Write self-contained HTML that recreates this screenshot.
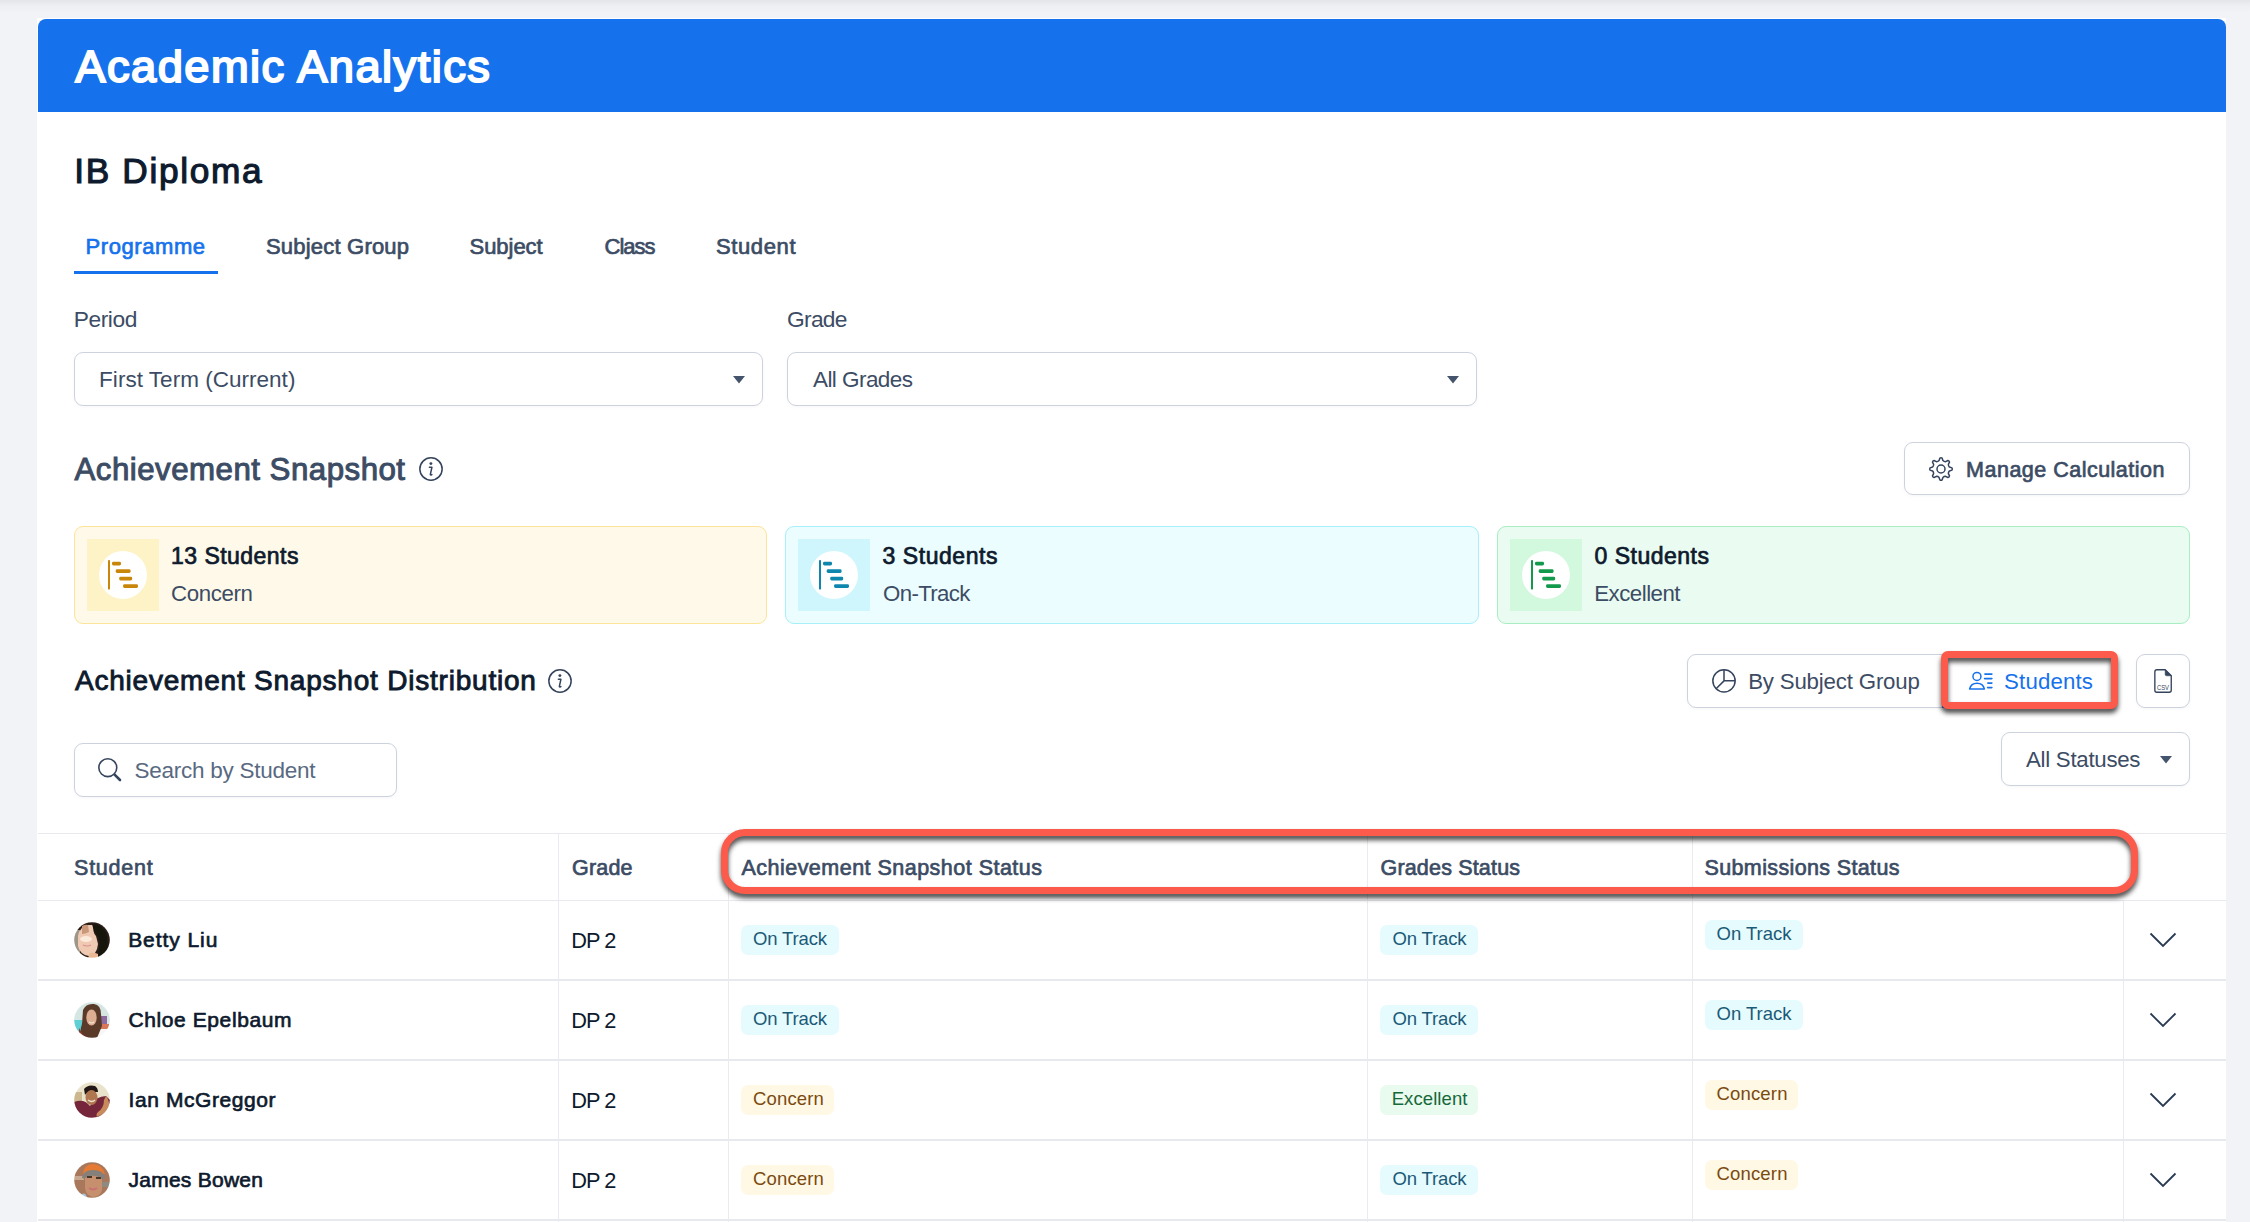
<!DOCTYPE html>
<html><head><meta charset="utf-8"><style>
html,body{margin:0;padding:0}
body{width:2250px;height:1222px;overflow:hidden;position:relative;font-family:"Liberation Sans",sans-serif;
background:linear-gradient(180deg,#e4e5e9 0px,#eeeff3 6px,#f2f3f7 14px,#f2f3f7 100%)}
.r,.t,.box{position:absolute}
.t{white-space:nowrap}
.box{box-sizing:border-box;border:1.5px solid #cdd3dd;border-radius:9px;background:#fff;box-shadow:0 1px 3px rgba(16,24,40,.04)}
.card{position:absolute;left:37.4px;top:18.4px;width:2188.6px;height:1300px;background:#fff}
.hdr{position:absolute;left:38px;top:19px;width:2188px;height:93px;background:#1672ec;border-radius:8px 8px 0 0}
</style></head><body>
<div class="card"></div><div class="hdr"></div>
<div class="t" id="title" style="left:75.34px;top:44.38px;font-size:45.25px;line-height:45.25px;letter-spacing:1.458px;font-weight:normal;color:#ffffff;-webkit-text-stroke:1.99px #ffffff;">Academic Analytics</div>
<div class="t" id="ib" style="left:74.2px;top:153.38px;font-size:35.25px;line-height:35.25px;letter-spacing:1.662px;font-weight:normal;color:#0e1a2d;-webkit-text-stroke:1.13px #0e1a2d;">IB Diploma</div>
<div class="t" id="tab1" style="left:85.62px;top:236.0px;font-size:22.0px;line-height:22.0px;letter-spacing:0.561px;font-weight:normal;color:#1672ec;-webkit-text-stroke:0.7px #1672ec;">Programme</div>
<div class="t" id="tab2" style="left:266.0px;top:236.0px;font-size:22.0px;line-height:22.0px;letter-spacing:0.199px;font-weight:normal;color:#3c4c64;-webkit-text-stroke:0.7px #3c4c64;">Subject Group</div>
<div class="t" id="tab3" style="left:469.5px;top:236.0px;font-size:22.0px;line-height:22.0px;letter-spacing:-0.038px;font-weight:normal;color:#3c4c64;-webkit-text-stroke:0.7px #3c4c64;">Subject</div>
<div class="t" id="tab4" style="left:604.58px;top:236.0px;font-size:22.0px;line-height:22.0px;letter-spacing:-1.025px;font-weight:normal;color:#3c4c64;-webkit-text-stroke:0.7px #3c4c64;">Class</div>
<div class="t" id="tab5" style="left:716.0px;top:236.0px;font-size:22.0px;line-height:22.0px;letter-spacing:0.616px;font-weight:normal;color:#3c4c64;-webkit-text-stroke:0.7px #3c4c64;">Student</div>
<div class="r" style="left:74px;top:271px;width:144px;height:3px;background:#1672ec"></div>
<div class="t" id="period" style="left:73.68px;top:308.12px;font-size:22.75px;line-height:22.75px;letter-spacing:-0.402px;font-weight:normal;color:#3c4c64;">Period</div>
<div class="t" id="gradelbl" style="left:787.1px;top:308.12px;font-size:22.75px;line-height:22.75px;letter-spacing:-0.731px;font-weight:normal;color:#3c4c64;">Grade</div>
<div class="box" style="left:74px;top:352px;width:689px;height:54px"></div>
<div class="box" style="left:787px;top:352px;width:690px;height:54px"></div>
<div class="t" id="dd1" style="left:99.1px;top:368.75px;font-size:22.5px;line-height:22.5px;letter-spacing:0.024px;font-weight:normal;color:#3c4c64;">First Term (Current)</div>
<div class="t" id="dd2" style="left:812.94px;top:368.75px;font-size:22.5px;line-height:22.5px;letter-spacing:-0.551px;font-weight:normal;color:#3c4c64;">All Grades</div>
<svg class="r" style="left:733px;top:375.5px" width="12" height="8" viewBox="0 0 12 8"><path d="M0 0H12L6 7.5Z" fill="#44546c"/></svg>
<svg class="r" style="left:1447px;top:375.5px" width="12" height="8" viewBox="0 0 12 8"><path d="M0 0H12L6 7.5Z" fill="#44546c"/></svg>
<div class="t" id="as" style="left:74.44px;top:454.38px;font-size:31.25px;line-height:31.25px;letter-spacing:0.486px;font-weight:normal;color:#3c4c64;-webkit-text-stroke:1.0px #3c4c64;">Achievement Snapshot</div>
<svg class="r" style="left:418px;top:455.9px" width="26" height="26" viewBox="-13 -13 26 26"><circle r="11.15" fill="none" stroke="#34445c" stroke-width="1.5"/><circle cx="-0.1" cy="-5.4" r="1.45" fill="#34445c"/><path d="M-1.6 -1.7H0.9L-0.6 5.2Q-0.8 6.2 0 6.0L0.9 5.6" fill="none" stroke="#34445c" stroke-width="1.5" stroke-linecap="round" stroke-linejoin="round"/></svg>
<div class="box" style="left:1904px;top:442px;width:286px;height:53px"></div>
<svg class="r" style="left:1927.95px;top:455.9px" width="26" height="26" viewBox="-13 -13 26 26"><path d="M-1.10 -10.95 Q0.00 -11.70 1.10 -10.95 L1.92 -8.49 Q3.02 -7.30 4.64 -7.36 L6.96 -8.52 Q8.27 -8.27 8.52 -6.96 L7.36 -4.64 Q7.30 -3.02 8.49 -1.92 L10.95 -1.10 Q11.70 0.00 10.95 1.10 L8.49 1.92 Q7.30 3.02 7.36 4.64 L8.52 6.96 Q8.27 8.27 6.96 8.52 L4.64 7.36 Q3.02 7.30 1.92 8.49 L1.10 10.95 Q0.00 11.70 -1.10 10.95 L-1.92 8.49 Q-3.02 7.30 -4.64 7.36 L-6.96 8.52 Q-8.27 8.27 -8.52 6.96 L-7.36 4.64 Q-7.30 3.02 -8.49 1.92 L-10.95 1.10 Q-11.70 0.00 -10.95 -1.10 L-8.49 -1.92 Q-7.30 -3.02 -7.36 -4.64 L-8.52 -6.96 Q-8.27 -8.27 -6.96 -8.52 L-4.64 -7.36 Q-3.02 -7.30 -1.92 -8.49 L-1.10 -10.95Z" fill="none" stroke="#34445c" stroke-width="1.5" stroke-linejoin="round"/><circle r="4.0" fill="none" stroke="#34445c" stroke-width="1.5"/></svg>
<div class="t" id="mc" style="left:1966.08px;top:459.75px;font-size:21.5px;line-height:21.5px;letter-spacing:0.491px;font-weight:normal;color:#3c4c64;-webkit-text-stroke:0.69px #3c4c64;">Manage Calculation</div>
<div class="r" style="left:74px;top:526px;width:693px;height:98px;box-sizing:border-box;background:#fff9e9;border:1.5px solid #fce49a;border-radius:9px"></div>
<div class="r" style="left:87px;top:539px;width:72px;height:72px;background:#fdf3c6"></div>
<svg class="r" style="left:99px;top:551px" width="48" height="48" viewBox="-24 -24 48 48"><circle r="24" fill="#fff"/><rect x="-15" y="-14.8" width="2" height="29.2" fill="#c9870a"/><rect x="-11" y="-13.2" width="9" height="3.6" rx="1.4" fill="#c9870a"/><rect x="-7.3" y="-5.7" width="14.9" height="3.6" rx="1.4" fill="#c9870a"/><rect x="-3.8" y="1.8" width="13" height="3.6" rx="1.4" fill="#c9870a"/><rect x="0.1" y="9.2" width="14.9" height="3.7" rx="1.4" fill="#c9870a"/></svg>
<div class="t" id="c1a" style="left:171.12px;top:545.0px;font-size:23.0px;line-height:23.0px;letter-spacing:0.46px;font-weight:normal;color:#0e1a2d;-webkit-text-stroke:0.74px #0e1a2d;">13 Students</div>
<div class="t" id="c1b" style="left:171.1px;top:582.88px;font-size:22.25px;line-height:22.25px;letter-spacing:-0.381px;font-weight:normal;color:#3c4c64;">Concern</div>
<div class="r" style="left:785px;top:526px;width:694px;height:98px;box-sizing:border-box;background:#ebfdfe;border:1.5px solid #a7eff9;border-radius:9px"></div>
<div class="r" style="left:798px;top:539px;width:72px;height:72px;background:#cff6fc"></div>
<svg class="r" style="left:810px;top:551px" width="48" height="48" viewBox="-24 -24 48 48"><circle r="24" fill="#fff"/><rect x="-15" y="-14.8" width="2" height="29.2" fill="#0e86ad"/><rect x="-11" y="-13.2" width="9" height="3.6" rx="1.4" fill="#0e86ad"/><rect x="-7.3" y="-5.7" width="14.9" height="3.6" rx="1.4" fill="#0e86ad"/><rect x="-3.8" y="1.8" width="13" height="3.6" rx="1.4" fill="#0e86ad"/><rect x="0.1" y="9.2" width="14.9" height="3.7" rx="1.4" fill="#0e86ad"/></svg>
<div class="t" id="c2a" style="left:882.54px;top:545.0px;font-size:23.0px;line-height:23.0px;letter-spacing:0.547px;font-weight:normal;color:#0e1a2d;-webkit-text-stroke:0.74px #0e1a2d;">3 Students</div>
<div class="t" id="c2b" style="left:883.02px;top:582.88px;font-size:22.25px;line-height:22.25px;letter-spacing:-0.633px;font-weight:normal;color:#3c4c64;">On-Track</div>
<div class="r" style="left:1497px;top:526px;width:693px;height:98px;box-sizing:border-box;background:#eafcf1;border:1.5px solid #a9edc3;border-radius:9px"></div>
<div class="r" style="left:1510px;top:539px;width:72px;height:72px;background:#d2f8de"></div>
<svg class="r" style="left:1522px;top:551px" width="48" height="48" viewBox="-24 -24 48 48"><circle r="24" fill="#fff"/><rect x="-15" y="-14.8" width="2" height="29.2" fill="#11994c"/><rect x="-11" y="-13.2" width="9" height="3.6" rx="1.4" fill="#11994c"/><rect x="-7.3" y="-5.7" width="14.9" height="3.6" rx="1.4" fill="#11994c"/><rect x="-3.8" y="1.8" width="13" height="3.6" rx="1.4" fill="#11994c"/><rect x="0.1" y="9.2" width="14.9" height="3.7" rx="1.4" fill="#11994c"/></svg>
<div class="t" id="c3a" style="left:1594.52px;top:545.0px;font-size:23.0px;line-height:23.0px;letter-spacing:0.491px;font-weight:normal;color:#0e1a2d;-webkit-text-stroke:0.74px #0e1a2d;">0 Students</div>
<div class="t" id="c3b" style="left:1594.16px;top:582.88px;font-size:22.25px;line-height:22.25px;letter-spacing:-0.487px;font-weight:normal;color:#3c4c64;">Excellent</div>
<div class="t" id="asd" style="left:74.94px;top:667.0px;font-size:28.0px;line-height:28.0px;letter-spacing:0.786px;font-weight:normal;color:#0e1a2d;-webkit-text-stroke:0.9px #0e1a2d;">Achievement Snapshot Distribution</div>
<svg class="r" style="left:546.6px;top:667.8px" width="26" height="26" viewBox="-13 -13 26 26"><circle r="11.15" fill="none" stroke="#34445c" stroke-width="1.5"/><circle cx="-0.1" cy="-5.4" r="1.45" fill="#34445c"/><path d="M-1.6 -1.7H0.9L-0.6 5.2Q-0.8 6.2 0 6.0L0.9 5.6" fill="none" stroke="#34445c" stroke-width="1.5" stroke-linecap="round" stroke-linejoin="round"/></svg>
<div class="box" style="left:1687px;top:654px;width:431px;height:54px"></div>
<div class="r" style="left:1942px;top:654px;width:176px;height:54px;box-sizing:border-box;border:1.5px solid #1672ec;border-radius:0 8px 8px 0"></div>
<svg class="r" style="left:1710px;top:667px" width="28" height="28" viewBox="-14 -13.85 28 28"><circle r="11.15" fill="none" stroke="#34445c" stroke-width="1.5"/><path d="M0 -11V0H11M0 0L-7.9 7.9" fill="none" stroke="#34445c" stroke-width="1.5"/></svg>
<div class="t" id="bsg" style="left:1748.14px;top:670.88px;font-size:22.25px;line-height:22.25px;letter-spacing:-0.174px;font-weight:normal;color:#3c4c64;">By Subject Group</div>
<svg class="r" style="left:1966px;top:670px" width="28" height="22" viewBox="0 0 28 22"><circle cx="10.95" cy="6.4" r="4.0" fill="none" stroke="#1672ec" stroke-width="1.5"/><path d="M3.6 19.05C4.5 15.4 7 13.35 11 13.35C15 13.35 17.5 15.4 18.4 19.05Z" fill="none" stroke="#1672ec" stroke-width="1.5" stroke-linejoin="round"/><path d="M18.9 4.1H25.9M18.6 8.6H25.9M21.8 13.1H25.9M21.6 17.6H25.9" stroke="#1672ec" stroke-width="1.6" stroke-linecap="round"/></svg>
<div class="t" id="stu" style="left:2004.1px;top:670.88px;font-size:22.25px;line-height:22.25px;letter-spacing:0.141px;font-weight:normal;color:#1672ec;">Students</div>
<div class="box" style="left:2136px;top:654px;width:54px;height:54px"></div>
<svg class="r" style="left:2152px;top:667px" width="22" height="28" viewBox="0 0 22 28"><path d="M5 2.75H13.2L19.25 8.8V23.25Q19.25 25.25 17.25 25.25H4.85Q2.85 25.25 2.85 23.25V4.9Q2.85 2.75 5 2.75Z" fill="none" stroke="#34445c" stroke-width="1.35" stroke-linejoin="round"/><path d="M13.2 2.75V7.3Q13.2 8.8 14.7 8.8H19.25Z" fill="#34445c" stroke="#34445c" stroke-width="0.6" stroke-linejoin="round"/><text x="5" y="22.7" font-size="7.6" textLength="12" lengthAdjust="spacingAndGlyphs" font-family="Liberation Sans" fill="#34445c">CSV</text></svg>
<div class="box" style="left:74px;top:743px;width:323px;height:54px"></div>
<svg class="r" style="left:95px;top:755px" width="30" height="30" viewBox="0 0 30 30"><circle cx="12.8" cy="12.7" r="8.95" fill="none" stroke="#34445c" stroke-width="1.6"/><path d="M19.6 19.6L25 25" stroke="#34445c" stroke-width="2.6" stroke-linecap="round"/></svg>
<div class="t" id="search" style="left:134.62px;top:759.75px;font-size:22.5px;line-height:22.5px;letter-spacing:-0.265px;font-weight:normal;color:#596981;">Search by Student</div>
<div class="box" style="left:2001px;top:732px;width:189px;height:54px"></div>
<div class="t" id="allst" style="left:2026.02px;top:748.88px;font-size:22.25px;line-height:22.25px;letter-spacing:-0.276px;font-weight:normal;color:#3c4c64;">All Statuses</div>
<svg class="r" style="left:2160px;top:756px" width="12" height="8" viewBox="0 0 12 8"><path d="M0 0H12L6 7.5Z" fill="#44546c"/></svg>
<div class="r" style="left:38px;top:833px;width:2188px;height:1px;background:#e8e9ee"></div>
<div class="r" style="left:38px;top:900px;width:2188px;height:1.3px;background:#e8e9ee"></div>
<div class="r" style="left:38px;top:979.1px;width:2188px;height:1.9px;background:#e8e9ee"></div>
<div class="r" style="left:38px;top:1059.1px;width:2188px;height:1.9px;background:#e8e9ee"></div>
<div class="r" style="left:38px;top:1139.1px;width:2188px;height:1.9px;background:#e8e9ee"></div>
<div class="r" style="left:38px;top:1219.1px;width:2188px;height:1.9px;background:#e8e9ee"></div>
<div class="r" style="left:558px;top:833px;width:1px;height:389px;background:#eaebf0"></div>
<div class="r" style="left:728px;top:833px;width:1px;height:389px;background:#eaebf0"></div>
<div class="r" style="left:1367px;top:833px;width:1px;height:389px;background:#eaebf0"></div>
<div class="r" style="left:1692px;top:833px;width:1px;height:389px;background:#eaebf0"></div>
<div class="r" style="left:2123px;top:900px;width:1px;height:322px;background:#eaebf0"></div>
<div class="t" id="th1" style="left:74.06px;top:857.75px;font-size:21.5px;line-height:21.5px;letter-spacing:0.74px;font-weight:normal;color:#3c4c64;-webkit-text-stroke:0.69px #3c4c64;">Student</div>
<div class="t" id="th2" style="left:572.04px;top:857.75px;font-size:21.5px;line-height:21.5px;letter-spacing:0.173px;font-weight:normal;color:#3c4c64;-webkit-text-stroke:0.69px #3c4c64;">Grade</div>
<div class="t" id="th3" style="left:741.46px;top:857.75px;font-size:21.5px;line-height:21.5px;letter-spacing:0.481px;font-weight:normal;color:#3c4c64;-webkit-text-stroke:0.69px #3c4c64;">Achievement Snapshot Status</div>
<div class="t" id="th4" style="left:1380.52px;top:857.75px;font-size:21.5px;line-height:21.5px;letter-spacing:0.173px;font-weight:normal;color:#3c4c64;-webkit-text-stroke:0.69px #3c4c64;">Grades Status</div>
<div class="t" id="th5" style="left:1704.54px;top:857.75px;font-size:21.5px;line-height:21.5px;letter-spacing:0.361px;font-weight:normal;color:#3c4c64;-webkit-text-stroke:0.69px #3c4c64;">Submissions Status</div>
<svg class="r" style="left:74px;top:921.8px" width="36" height="36" viewBox="0 0 36 36"><defs><clipPath id="cp0"><circle cx="18" cy="18" r="17.8"/></clipPath><filter id="bl0" x="-10%" y="-10%" width="120%" height="120%"><feGaussianBlur stdDeviation="0.7"/></filter></defs><g clip-path="url(#cp0)"><g filter="url(#bl0)"><rect width="36" height="36" fill="#2a1e18"/><rect x="0" y="8" width="6" height="26" fill="#9d968a"/><path d="M4 14 Q6 4 14 3 L20 3 Q18 10 22 14 L24 22 Q23 33 15 34 Q6 33 4 24Z" fill="#f0c9b3"/><path d="M8 4 Q12 2 14 3 L15 10 Q11 12 8 12Z" fill="#c9977a"/><ellipse cx="12" cy="17" rx="6" ry="3" fill="#fbe9da"/><path d="M9 23 Q13 25 17 23" stroke="#d98f8f" stroke-width="1.2" fill="none"/><path d="M16 31 Q20 30 24 32 L24 36 L14 36Z" fill="#eab894"/><path d="M18 2 Q30 2 33 14 L34 30 Q30 36 24 36 L25 26 Q27 18 22 12 Q19 8 18 2Z" fill="#191210"/></g></g></svg>
<div class="t" id="n1" style="left:128.14px;top:928.5px;font-size:21.0px;line-height:21.0px;letter-spacing:0.942px;font-weight:normal;color:#0e1a2d;-webkit-text-stroke:0.67px #0e1a2d;">Betty Liu</div>
<div class="t" id="dp1" style="left:571.18px;top:930.12px;font-size:21.75px;line-height:21.75px;letter-spacing:-0.9px;font-weight:normal;color:#0e1a2d;">DP 2</div>
<div class="r" style="left:741px;top:925px;width:98px;height:29.5px;background:#e6fbfe;border-radius:7px"></div>
<div class="t" id="b00" style="left:753.04px;top:929.75px;font-size:18.5px;line-height:18.5px;letter-spacing:-0.159px;font-weight:normal;color:#1b5a77;">On Track</div>
<div class="r" style="left:1380px;top:925px;width:98px;height:29.5px;background:#e6fbfe;border-radius:7px"></div>
<div class="t" id="b01" style="left:1392.54px;top:929.75px;font-size:18.5px;line-height:18.5px;letter-spacing:-0.159px;font-weight:normal;color:#1b5a77;">On Track</div>
<div class="r" style="left:1705px;top:920px;width:98px;height:29.5px;background:#e6fbfe;border-radius:7px"></div>
<div class="t" id="b02" style="left:1716.58px;top:924.75px;font-size:18.5px;line-height:18.5px;letter-spacing:-0.03px;font-weight:normal;color:#1b5a77;">On Track</div>
<svg class="r" style="left:2149px;top:932px" width="28" height="16" viewBox="0 0 28 16"><path d="M1.5 1.5L14 14L26.5 1.5" fill="none" stroke="#2a3a52" stroke-width="1.8"/></svg>
<svg class="r" style="left:74px;top:1001.8px" width="36" height="36" viewBox="0 0 36 36"><defs><clipPath id="cp1"><circle cx="18" cy="18" r="17.8"/></clipPath><filter id="bl1" x="-10%" y="-10%" width="120%" height="120%"><feGaussianBlur stdDeviation="0.7"/></filter></defs><g clip-path="url(#cp1)"><g filter="url(#bl1)"><rect width="36" height="36" fill="#d6e6e2"/><rect x="0" y="18" width="8" height="14" fill="#5fcfd6"/><rect x="27" y="14" width="6" height="10" fill="#8e6aa0"/><rect x="24" y="22" width="12" height="5" fill="#d9775a"/><path d="M22 27 L36 27 L36 36 L22 36Z" fill="#f7f7f8"/><path d="M9 8 Q12 1 20 2 Q27 3 27 12 L28 24 L23 36 L8 36 Q5 30 8 22Z" fill="#5a3b2c"/><path d="M5 26 Q8 32 12 36 L5 36Z" fill="#8a3a2a"/><ellipse cx="17.5" cy="15.5" rx="5.2" ry="8" fill="#dcae92"/><path d="M15 20 Q17.5 22 20 20" stroke="#f5e6e0" stroke-width="1.2" fill="none"/></g></g></svg>
<div class="t" id="n2" style="left:128.56px;top:1008.5px;font-size:21.0px;line-height:21.0px;letter-spacing:0.585px;font-weight:normal;color:#0e1a2d;-webkit-text-stroke:0.67px #0e1a2d;">Chloe Epelbaum</div>
<div class="t" id="dp2" style="left:571.18px;top:1010.12px;font-size:21.75px;line-height:21.75px;letter-spacing:-0.9px;font-weight:normal;color:#0e1a2d;">DP 2</div>
<div class="r" style="left:741px;top:1005px;width:98px;height:29.5px;background:#e6fbfe;border-radius:7px"></div>
<div class="t" id="b10" style="left:753.04px;top:1009.75px;font-size:18.5px;line-height:18.5px;letter-spacing:-0.159px;font-weight:normal;color:#1b5a77;">On Track</div>
<div class="r" style="left:1380px;top:1005px;width:98px;height:29.5px;background:#e6fbfe;border-radius:7px"></div>
<div class="t" id="b11" style="left:1392.54px;top:1009.75px;font-size:18.5px;line-height:18.5px;letter-spacing:-0.159px;font-weight:normal;color:#1b5a77;">On Track</div>
<div class="r" style="left:1705px;top:1000px;width:98px;height:29.5px;background:#e6fbfe;border-radius:7px"></div>
<div class="t" id="b12" style="left:1716.58px;top:1004.75px;font-size:18.5px;line-height:18.5px;letter-spacing:-0.03px;font-weight:normal;color:#1b5a77;">On Track</div>
<svg class="r" style="left:2149px;top:1012px" width="28" height="16" viewBox="0 0 28 16"><path d="M1.5 1.5L14 14L26.5 1.5" fill="none" stroke="#2a3a52" stroke-width="1.8"/></svg>
<svg class="r" style="left:74px;top:1081.8px" width="36" height="36" viewBox="0 0 36 36"><defs><clipPath id="cp2"><circle cx="18" cy="18" r="17.8"/></clipPath><filter id="bl2" x="-10%" y="-10%" width="120%" height="120%"><feGaussianBlur stdDeviation="0.7"/></filter></defs><g clip-path="url(#cp2)"><g filter="url(#bl2)"><rect width="36" height="36" fill="#e9e3cc"/><rect x="0" y="10" width="8" height="12" fill="#cdb78f"/><path d="M0 20 Q10 16 16 24 Q22 14 32 14 L36 18 L36 36 L0 36Z" fill="#74283a"/><path d="M10 7 Q14 2 21 4 Q24 6 24 10 L17 10 Q12 11 11 13Z" fill="#231913"/><ellipse cx="17.5" cy="15.5" rx="6" ry="7.5" fill="#b07650"/><path d="M14 18 Q18 21 21 18" stroke="#f0e2d0" stroke-width="1.4" fill="none"/><path d="M32 14 Q37 20 34 28 Q28 34 18 36 L26 36 Q20 34 24 30 Q30 26 30 18Z" fill="#c88a5c"/></g></g></svg>
<div class="t" id="n3" style="left:128.6px;top:1088.5px;font-size:21.0px;line-height:21.0px;letter-spacing:0.574px;font-weight:normal;color:#0e1a2d;-webkit-text-stroke:0.67px #0e1a2d;">Ian McGreggor</div>
<div class="t" id="dp3" style="left:571.18px;top:1090.12px;font-size:21.75px;line-height:21.75px;letter-spacing:-0.9px;font-weight:normal;color:#0e1a2d;">DP 2</div>
<div class="r" style="left:741px;top:1085px;width:93px;height:29.5px;background:#fff8e5;border-radius:7px"></div>
<div class="t" id="b20" style="left:753.04px;top:1089.75px;font-size:18.5px;line-height:18.5px;letter-spacing:0.152px;font-weight:normal;color:#7b4a0f;">Concern</div>
<div class="r" style="left:1380px;top:1085px;width:98px;height:29.5px;background:#e8fbee;border-radius:7px"></div>
<div class="t" id="b21" style="left:1391.64px;top:1089.75px;font-size:18.5px;line-height:18.5px;letter-spacing:0.102px;font-weight:normal;color:#17683a;">Excellent</div>
<div class="r" style="left:1705px;top:1080px;width:93px;height:29.5px;background:#fff8e5;border-radius:7px"></div>
<div class="t" id="b22" style="left:1716.58px;top:1084.75px;font-size:18.5px;line-height:18.5px;letter-spacing:0.152px;font-weight:normal;color:#7b4a0f;">Concern</div>
<svg class="r" style="left:2149px;top:1092px" width="28" height="16" viewBox="0 0 28 16"><path d="M1.5 1.5L14 14L26.5 1.5" fill="none" stroke="#2a3a52" stroke-width="1.8"/></svg>
<svg class="r" style="left:74px;top:1161.8px" width="36" height="36" viewBox="0 0 36 36"><defs><clipPath id="cp3"><circle cx="18" cy="18" r="17.8"/></clipPath><filter id="bl3" x="-10%" y="-10%" width="120%" height="120%"><feGaussianBlur stdDeviation="0.7"/></filter></defs><g clip-path="url(#cp3)"><g filter="url(#bl3)"><rect width="36" height="36" fill="#a9785c"/><rect x="0" y="14" width="10" height="4" fill="#c8a88e"/><rect x="26" y="20" width="10" height="5" fill="#8f8a7f"/><path d="M9 12 Q10 2 19 2 Q29 3 31 12Z" fill="#e57a34"/><path d="M8 16 Q9 8 19 8 Q30 8 31 16 L28 18 Q20 11 11 17Z" fill="#858079"/><path d="M11 16 Q20 11 28 17 L28 28 Q26 35 19 35 Q12 34 11 26Z" fill="#c68f6d"/><rect x="13" y="14" width="5" height="2" fill="#4b3428"/><rect x="22" y="15" width="5" height="2" fill="#4b3428"/><path d="M15 26 Q19 29 23 26" stroke="#c96f74" stroke-width="1.8" fill="none"/><path d="M8 32 Q12 30 13 36 L6 36Z" fill="#a9c4d8"/></g></g></svg>
<div class="t" id="n4" style="left:128.48px;top:1168.5px;font-size:21.0px;line-height:21.0px;letter-spacing:0.258px;font-weight:normal;color:#0e1a2d;-webkit-text-stroke:0.67px #0e1a2d;">James Bowen</div>
<div class="t" id="dp4" style="left:571.18px;top:1170.12px;font-size:21.75px;line-height:21.75px;letter-spacing:-0.9px;font-weight:normal;color:#0e1a2d;">DP 2</div>
<div class="r" style="left:741px;top:1165px;width:93px;height:29.5px;background:#fff8e5;border-radius:7px"></div>
<div class="t" id="b30" style="left:753.04px;top:1169.75px;font-size:18.5px;line-height:18.5px;letter-spacing:0.152px;font-weight:normal;color:#7b4a0f;">Concern</div>
<div class="r" style="left:1380px;top:1165px;width:98px;height:29.5px;background:#e6fbfe;border-radius:7px"></div>
<div class="t" id="b31" style="left:1392.54px;top:1169.75px;font-size:18.5px;line-height:18.5px;letter-spacing:-0.159px;font-weight:normal;color:#1b5a77;">On Track</div>
<div class="r" style="left:1705px;top:1160px;width:93px;height:29.5px;background:#fff8e5;border-radius:7px"></div>
<div class="t" id="b32" style="left:1716.58px;top:1164.75px;font-size:18.5px;line-height:18.5px;letter-spacing:0.152px;font-weight:normal;color:#7b4a0f;">Concern</div>
<svg class="r" style="left:2149px;top:1172px" width="28" height="16" viewBox="0 0 28 16"><path d="M1.5 1.5L14 14L26.5 1.5" fill="none" stroke="#2a3a52" stroke-width="1.8"/></svg>
<div class="r" style="left:1941.4px;top:651.4px;width:176.8px;height:57.2px;box-sizing:border-box;border:7px solid #fc5a4b;border-radius:7px;filter:drop-shadow(0 4px 2.5px rgba(0,0,0,.72))"></div>
<div class="r" style="left:721.4px;top:829px;width:1416.6px;height:65.4px;box-sizing:border-box;border:7.2px solid #fc5a4b;border-radius:24px;filter:drop-shadow(0 4px 2.5px rgba(0,0,0,.72))"></div>
</body></html>
